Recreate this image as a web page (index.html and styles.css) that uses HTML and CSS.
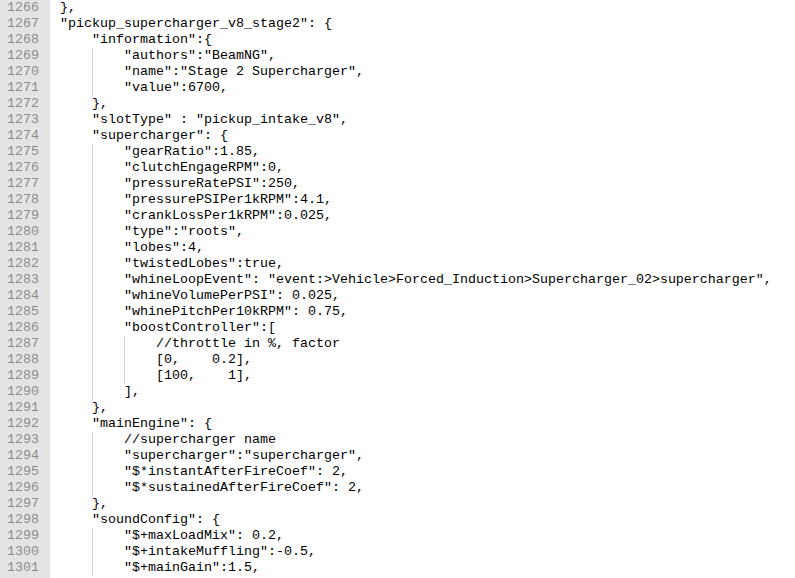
FILE: index.html
```html
<!DOCTYPE html>
<html>
<head>
<meta charset="utf-8">
<link rel="stylesheet" href="styles.css">
</head>
<body>
<div class="editor">
<div class="line"><span class="num">1266</span><span class="code">},</span></div>
<div class="line"><span class="num">1267</span><span class="code">"pickup_supercharger_v8_stage2": {</span></div>
<div class="line"><span class="num">1268</span><span class="code"><span class="t"></span>"information":{</span></div>
<div class="line"><span class="num">1269</span><span class="code"><span class="t"></span><span class="t g"></span>"authors":"BeamNG",</span></div>
<div class="line"><span class="num">1270</span><span class="code"><span class="t"></span><span class="t g"></span>"name":"Stage 2 Supercharger",</span></div>
<div class="line"><span class="num">1271</span><span class="code"><span class="t"></span><span class="t g"></span>"value":6700,</span></div>
<div class="line"><span class="num">1272</span><span class="code"><span class="t"></span>},</span></div>
<div class="line"><span class="num">1273</span><span class="code"><span class="t"></span>"slotType" : "pickup_intake_v8",</span></div>
<div class="line"><span class="num">1274</span><span class="code"><span class="t"></span>"supercharger": {</span></div>
<div class="line"><span class="num">1275</span><span class="code"><span class="t"></span><span class="t g"></span>"gearRatio":1.85,</span></div>
<div class="line"><span class="num">1276</span><span class="code"><span class="t"></span><span class="t g"></span>"clutchEngageRPM":0,</span></div>
<div class="line"><span class="num">1277</span><span class="code"><span class="t"></span><span class="t g"></span>"pressureRatePSI":250,</span></div>
<div class="line"><span class="num">1278</span><span class="code"><span class="t"></span><span class="t g"></span>"pressurePSIPer1kRPM":4.1,</span></div>
<div class="line"><span class="num">1279</span><span class="code"><span class="t"></span><span class="t g"></span>"crankLossPer1kRPM":0.025,</span></div>
<div class="line"><span class="num">1280</span><span class="code"><span class="t"></span><span class="t g"></span>"type":"roots",</span></div>
<div class="line"><span class="num">1281</span><span class="code"><span class="t"></span><span class="t g"></span>"lobes":4,</span></div>
<div class="line"><span class="num">1282</span><span class="code"><span class="t"></span><span class="t g"></span>"twistedLobes":true,</span></div>
<div class="line"><span class="num">1283</span><span class="code"><span class="t"></span><span class="t g"></span>"whineLoopEvent": "event:&gt;Vehicle&gt;Forced_Induction&gt;Supercharger_02&gt;supercharger",</span></div>
<div class="line"><span class="num">1284</span><span class="code"><span class="t"></span><span class="t g"></span>"whineVolumePerPSI": 0.025,</span></div>
<div class="line"><span class="num">1285</span><span class="code"><span class="t"></span><span class="t g"></span>"whinePitchPer10kRPM": 0.75,</span></div>
<div class="line"><span class="num">1286</span><span class="code"><span class="t"></span><span class="t g"></span>"boostController":[</span></div>
<div class="line"><span class="num">1287</span><span class="code"><span class="t"></span><span class="t g"></span><span class="t g"></span>//throttle in %, factor</span></div>
<div class="line"><span class="num">1288</span><span class="code"><span class="t"></span><span class="t g"></span><span class="t g"></span>[0,    0.2],</span></div>
<div class="line"><span class="num">1289</span><span class="code"><span class="t"></span><span class="t g"></span><span class="t g"></span>[100,    1],</span></div>
<div class="line"><span class="num">1290</span><span class="code"><span class="t"></span><span class="t g"></span>],</span></div>
<div class="line"><span class="num">1291</span><span class="code"><span class="t"></span>},</span></div>
<div class="line"><span class="num">1292</span><span class="code"><span class="t"></span>"mainEngine": {</span></div>
<div class="line"><span class="num">1293</span><span class="code"><span class="t"></span><span class="t g"></span>//supercharger name</span></div>
<div class="line"><span class="num">1294</span><span class="code"><span class="t"></span><span class="t g"></span>"supercharger":"supercharger",</span></div>
<div class="line"><span class="num">1295</span><span class="code"><span class="t"></span><span class="t g"></span>"$*instantAfterFireCoef": 2,</span></div>
<div class="line"><span class="num">1296</span><span class="code"><span class="t"></span><span class="t g"></span>"$*sustainedAfterFireCoef": 2,</span></div>
<div class="line"><span class="num">1297</span><span class="code"><span class="t"></span>},</span></div>
<div class="line"><span class="num">1298</span><span class="code"><span class="t"></span>"soundConfig": {</span></div>
<div class="line"><span class="num">1299</span><span class="code"><span class="t"></span><span class="t g"></span>"$+maxLoadMix": 0.2,</span></div>
<div class="line"><span class="num">1300</span><span class="code"><span class="t"></span><span class="t g"></span>"$+intakeMuffling":-0.5,</span></div>
<div class="line"><span class="num">1301</span><span class="code"><span class="t"></span><span class="t g"></span>"$+mainGain":1.5,</span></div>
<div class="line"><span class="num"></span><span class="code"></span></div>
</div>
</body>
</html>
```
FILE: styles.css
```css
html, body {
  margin: 0;
  padding: 0;
  background: #ffffff;
}
.editor {
  display: flex;
  flex-direction: column;
  width: 795px;
  height: 578px;
  overflow: hidden;
  font-family: "Liberation Mono", "Courier New", monospace;
  font-size: 13.333px;
  line-height: 16px;
  color: #000000;
}
.line {
  display: flex;
  flex: 0 0 16px;
  height: 16px;
}
.num {
  flex: 0 0 50px;
  box-sizing: border-box;
  padding-right: 11px;
  text-align: right;
  background: #e4e4e4;
  color: #8c8c8c;
}
.code {
  padding-left: 10px;
  white-space: pre;
}
.t {
  display: inline-block;
  width: 32px;
  height: 16px;
  vertical-align: top;
}
.g {
  background-image: repeating-linear-gradient(to bottom, #a8a8a8 0, #a8a8a8 1px, transparent 1px, transparent 2px);
  background-size: 1px 100%;
  background-repeat: no-repeat;
  background-position: 0 0;
}
```
